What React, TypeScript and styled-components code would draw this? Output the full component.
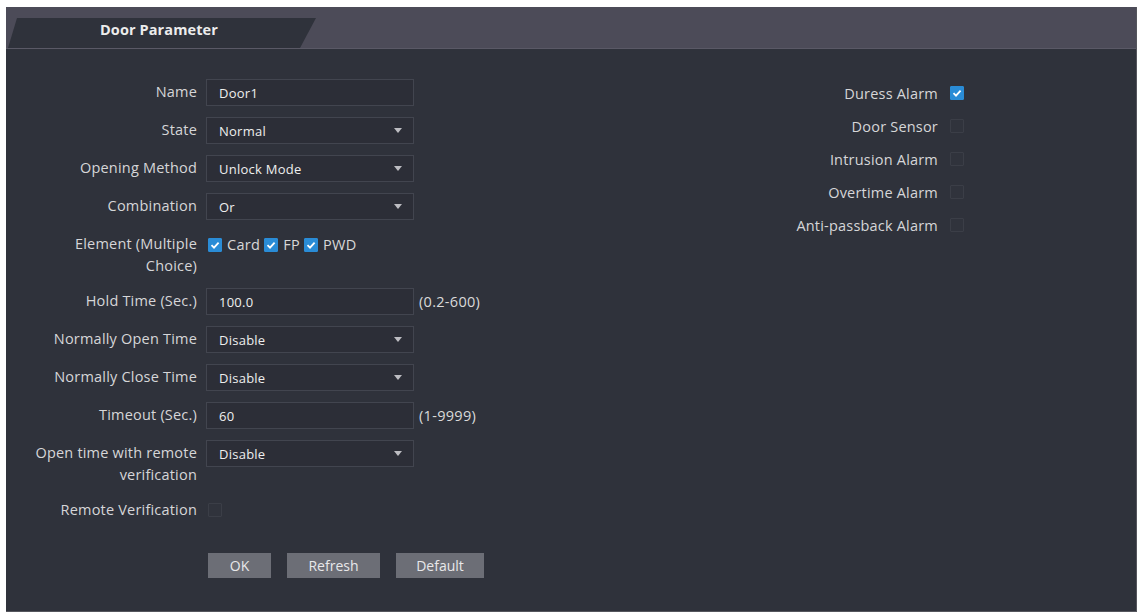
import React from "react";
import styled, { createGlobalStyle } from "styled-components";

const GlobalStyle = createGlobalStyle`
  html, body {
    margin: 0;
    padding: 0;
    background: #ffffff;
  }
  body {
    font-family: "Open Sans", "Noto Sans", sans-serif;
  }
`;

const Page = styled.div`
  width: 1140px;
  height: 615px;
  padding: 7px 3px 3px 6px;
  box-sizing: border-box;
`;

const Panel = styled.div`
  width: 100%;
  height: 100%;
  background: #2f323b;
  border-right: 1px solid #55565d;
  border-bottom: 1px solid #55565d;
  box-sizing: border-box;
  display: flex;
  flex-direction: column;
`;

const Header = styled.div`
  height: 42px;
  background: #4c4b58;
  border-bottom: 1px solid #5a5966;
  display: flex;
  align-items: flex-end;
  box-sizing: border-box;
`;

const Tab = styled.div`
  width: 308px;
  height: 30px;
  margin-left: 2px;
  background: #2f323b;
  clip-path: polygon(9px 0, 100% 0, calc(100% - 16px) 100%, 0 100%);
  box-sizing: border-box;
  padding: 2px 0 0 92px;
  color: #ececec;
  font-size: 14.5px;
  font-weight: 700;
  letter-spacing: 0.1px;
`;

const Body = styled.div`
  flex: 1;
  display: flex;
  padding-top: 30px;
`;

const FormColumn = styled.div`
  width: 560px;
  display: flex;
  flex-direction: column;
  gap: 11px;
`;

const Row = styled.div`
  display: flex;
  align-items: flex-start;
`;

const Label = styled.div`
  width: 191px;
  padding-top: 2px;
  text-align: right;
  line-height: 22px;
  font-size: 14.5px;
  color: #d6d6d8;
  letter-spacing: 0.2px;
  margin-right: 9px;
  white-space: nowrap;
`;

const Field = styled.div`
  width: 208px;
  height: 27px;
  box-sizing: border-box;
  border: 1px solid #42454f;
  background: #2c2e37;
  display: flex;
  align-items: center;
  justify-content: space-between;
  padding: 0 11px 0 12px;
  font-size: 13px;
  color: #eeeeee;
  letter-spacing: 0.25px;
`;

const Arrow = styled.span`
  width: 0;
  height: 0;
  border-left: 4px solid transparent;
  border-right: 4px solid transparent;
  border-top: 5px solid #bdbdc2;
`;

const Hint = styled.div`
  margin-left: 5px;
  line-height: 27px;
  font-size: 14.5px;
  color: #dadada;
  letter-spacing: 0.3px;
`;

const Choices = styled.div<{ $h?: number }>`
  display: flex;
  align-items: center;
  height: ${(p) => p.$h ?? 27}px;
  padding-left: 2px;
`;

const ChoiceText = styled.span`
  margin: 0 4px 0 5px;
  font-size: 14.5px;
  color: #d8d8d8;
  letter-spacing: 0.3px;
`;

const Box = styled.span<{ $on?: boolean }>`
  width: 14px;
  height: 14px;
  box-sizing: border-box;
  display: inline-flex;
  align-items: center;
  justify-content: center;
  background: ${(p) => (p.$on ? "#2a8cd6" : "#30333c")};
  border: 1px solid ${(p) => (p.$on ? "#2a8cd6" : "#3b3e47")};
  border-radius: 1px;
`;

const ButtonBar = styled.div`
  display: flex;
  gap: 16px;
  margin: 19px 0 0 202px;
`;

const Button = styled.button<{ $w: number }>`
  width: ${(p) => p.$w}px;
  height: 25px;
  border: none;
  background: #6c6e76;
  color: #e8e8ea;
  font-family: "Open Sans", sans-serif;
  font-size: 14px;
  padding: 0;
`;

const AlarmColumn = styled.div`
  margin-left: 222px;
  display: flex;
  flex-direction: column;
  gap: 11px;
  padding-top: 3px;
`;

const AlarmRow = styled.div`
  display: flex;
  align-items: center;
  height: 22px;
`;

const AlarmLabel = styled.div`
  width: 150px;
  text-align: right;
  font-size: 14.5px;
  color: #d6d6d8;
  letter-spacing: 0.2px;
  margin-right: 12px;
  white-space: nowrap;
`;

const Check = ({ on }: { on?: boolean }) => (
  <Box $on={on}>
    {on && (
      <svg width="10" height="10" viewBox="0 0 10 10">
        <path d="M1.5 5.2 L4 7.6 L8.6 2.6" fill="none" stroke="#fff" strokeWidth="1.8" />
      </svg>
    )}
  </Box>
);

type Item = { label: string[]; value?: string; select?: boolean; hint?: string };

const fields: Item[] = [
  { label: ["Name"], value: "Door1" },
  { label: ["State"], value: "Normal", select: true },
  { label: ["Opening Method"], value: "Unlock Mode", select: true },
  { label: ["Combination"], value: "Or", select: true },
];

const timing: Item[] = [
  { label: ["Hold Time (Sec.)"], value: "100.0", hint: "(0.2-600)" },
  { label: ["Normally Open Time"], value: "Disable", select: true },
  { label: ["Normally Close Time"], value: "Disable", select: true },
  { label: ["Timeout (Sec.)"], value: "60", hint: "(1-9999)" },
  { label: ["Open time with remote", "verification"], value: "Disable", select: true },
];

const alarms = [
  { name: "Duress Alarm", on: true },
  { name: "Door Sensor" },
  { name: "Intrusion Alarm" },
  { name: "Overtime Alarm" },
  { name: "Anti-passback Alarm" },
];

const FieldRow = ({ item }: { item: Item }) => (
  <Row>
    <Label>
      {item.label.map((l) => (
        <div key={l}>{l}</div>
      ))}
    </Label>
    <Field>
      <span>{item.value}</span>
      {item.select && <Arrow />}
    </Field>
    {item.hint && <Hint>{item.hint}</Hint>}
  </Row>
);

const App = () => {
  return (
    <Page>
      <GlobalStyle />
      <Panel>
        <Header>
          <Tab>Door Parameter</Tab>
        </Header>
        <Body>
          <FormColumn>
            {fields.map((f) => (
              <FieldRow key={f.label[0]} item={f} />
            ))}
            <Row>
              <Label>
                <div>Element (Multiple</div>
                <div>Choice)</div>
              </Label>
              <Choices>
                <Check on />
                <ChoiceText>Card</ChoiceText>
                <Check on />
                <ChoiceText>FP</ChoiceText>
                <Check on />
                <ChoiceText>PWD</ChoiceText>
              </Choices>
            </Row>
            {timing.map((f) => (
              <FieldRow key={f.label[0]} item={f} />
            ))}
            <Row>
              <Label>Remote Verification</Label>
              <Choices $h={26}>
                <Check />
              </Choices>
            </Row>
            <ButtonBar>
              <Button $w={63}>OK</Button>
              <Button $w={93}>Refresh</Button>
              <Button $w={88}>Default</Button>
            </ButtonBar>
          </FormColumn>
          <AlarmColumn>
            {alarms.map((a) => (
              <AlarmRow key={a.name}>
                <AlarmLabel>{a.name}</AlarmLabel>
                <Check on={a.on} />
              </AlarmRow>
            ))}
          </AlarmColumn>
        </Body>
      </Panel>
    </Page>
  );
};

export default App;
